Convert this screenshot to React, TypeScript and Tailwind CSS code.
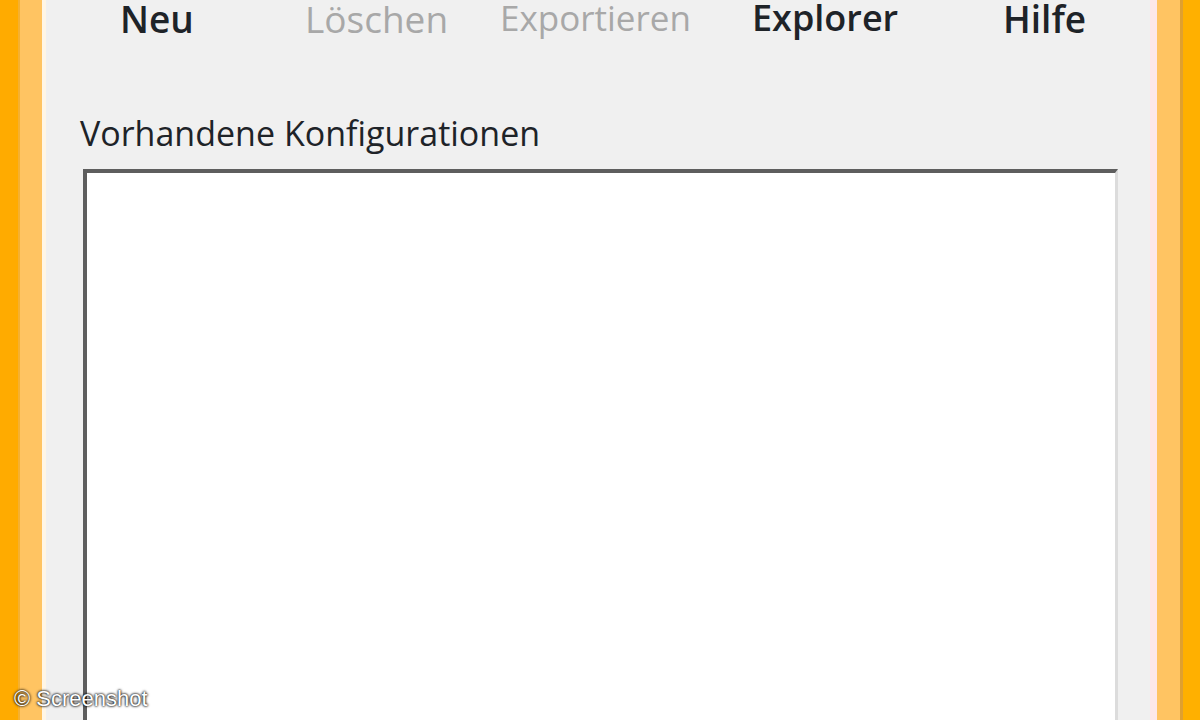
import React from "react";

export default function App() {
  const font = { fontFamily: '"Open Sans", "DejaVu Sans", sans-serif' };
  return (
    <div className="relative flex h-[720px] w-[1200px] overflow-hidden bg-[#f0f0f0]" style={font}>
      <div className="w-[18px] shrink-0 bg-[#ffab00]" />
      <div className="w-[2px] shrink-0 bg-[#f5b030]" />
      <div className="w-[22px] shrink-0 bg-[#ffc462]" />
      <div className="w-[4px] shrink-0 bg-[#fff6e6]" />
      <main className="flex flex-1 flex-col bg-[#f0f0f0]">
        <div className="flex h-[40px] items-start text-[37px] leading-none">
          <div className="w-[74px] shrink-0" />
          <div className="w-[185px] shrink-0 font-semibold text-[#1e2328]">Neu</div>
          <div className="w-[195px] shrink-0 text-[#a8a8a8]">Löschen</div>
          <div className="w-[252px] shrink-0 text-[#a8a8a8] text-[35px]">Exportieren</div>
          <div className="w-[251px] shrink-0 font-semibold text-[#1e2328] text-[36px]">Explorer</div>
          <div className="shrink-0 font-semibold text-[#1e2328]">Hilfe</div>
        </div>
        <div className="ml-[34px] mt-[76px] text-[34px] leading-none text-[#1e2328]">
          Vorhandene Konfigurationen
        </div>
        <div className="ml-[37px] mr-[32px] mt-[19px] flex-1 border-l-[4px] border-t-[4px] border-r-[3px] border-l-[#5e5e5e] border-t-[#5e5e5e] border-r-[#dcdcdc] bg-white" />
      </main>
      <div className="w-[7px] shrink-0 bg-[#fde8e8]" />
      <div className="w-[23px] shrink-0 bg-[#ffc462]" />
      <div className="w-[3px] shrink-0 bg-[#e0a030]" />
      <div className="w-[17px] shrink-0 bg-[#ffb000]" />
      <div
        className="absolute bottom-[10px] left-[14px] text-[22px] leading-none text-white"
        style={{ fontFamily: '"Liberation Sans", Arial, sans-serif', textShadow: "0 0 3px #000, 0 0 2px #000" }}
      >
        © Screenshot
      </div>
    </div>
  );
}
